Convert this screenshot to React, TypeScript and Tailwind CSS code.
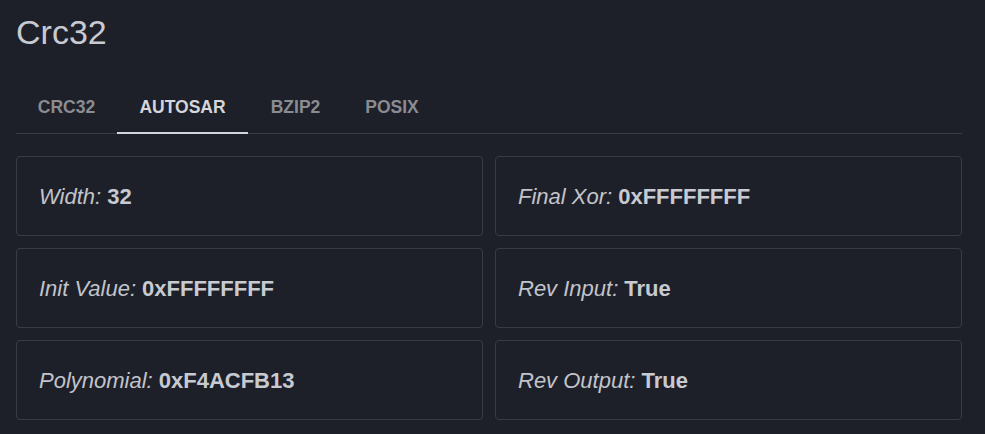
const tabs = [
  { label: "CRC32", w: "w-[101px]" },
  { label: "AUTOSAR", w: "w-[131px]" },
  { label: "BZIP2", w: "w-[95px]" },
  { label: "POSIX", w: "w-[98px]" },
];

const params = [
  { label: "Width", value: "32" },
  { label: "Final Xor", value: "0xFFFFFFFF" },
  { label: "Init Value", value: "0xFFFFFFFF" },
  { label: "Rev Input", value: "True" },
  { label: "Polynomial", value: "0xF4ACFB13" },
  { label: "Rev Output", value: "True" },
];

export default function App() {
  const active = "AUTOSAR";

  return (
    <div
      className="w-[985px] h-[434px] overflow-hidden bg-[#1e2029] text-[#c5c7ce] pl-4 pr-[23px]"
      style={{ fontFamily: '"Liberation Sans", Arial, sans-serif' }}
    >
      {/* Title */}
      <h1 className="pt-[12px] h-[85px] text-[34px] leading-[40px] text-[#c8cad1]">
        Crc32
      </h1>

      {/* Tabs */}
      <div className="flex h-[49px] border-b border-[#3a3c45]">
        {tabs.map((tab) => (
          <div
            key={tab.label}
            className={`${tab.w} relative flex items-center justify-center pb-[4px] text-[17.5px] font-bold uppercase ${
              tab.label === active ? "text-[#d4d6dc]" : "text-[#8a8c92]"
            }`}
          >
            {tab.label}
            {tab.label === active && (
              <span className="absolute left-0 right-0 -bottom-px h-[2px] bg-[#d4d6dc]" />
            )}
          </div>
        ))}
      </div>

      {/* Parameters */}
      <div className="mt-[22px] grid grid-cols-2 gap-x-[12px] gap-y-[12px]">
        {params.map((p) => (
          <div
            key={p.label}
            className="h-[80px] flex items-center px-[22px] border border-[#3a3c45] rounded-[4px] text-[22px] text-[#c2c4cb]"
          >
            <span className="italic">{p.label}:</span>
            <span className="ml-[6px] font-bold text-[#c8cad1]">{p.value}</span>
          </div>
        ))}
      </div>
    </div>
  );
}
